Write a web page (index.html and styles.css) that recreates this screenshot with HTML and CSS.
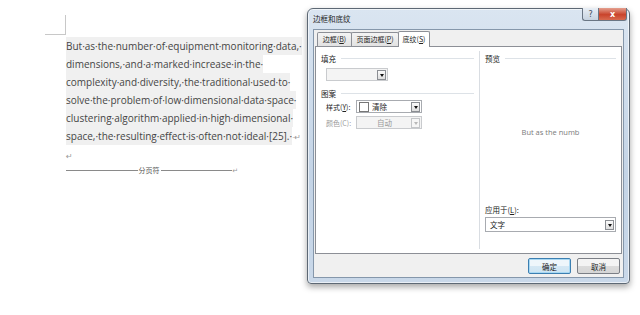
FILE: index.html
```html
<!DOCTYPE html>
<html lang="zh">
<head>
<meta charset="utf-8">
<title>边框和底纹</title>
<link rel="stylesheet" href="styles.css">
</head>
<body>
<div class="page">
  <div class="corner"></div>
  <p class="para"><span class="hl">But·as·the·number·of·equipment·monitoring·data,·</span><br><span class="hl">dimensions,·and·a·marked·increase·in·the·</span><br><span class="hl">complexity·and·diversity,·the·traditional·used·to·</span><br><span class="hl">solve·the·problem·of·low·dimensional·data·space·</span><br><span class="hl">clustering·algorithm·applied·in·high·dimensional·</span><br><span class="hl">space,·the·resulting·effect·is·often·not·ideal·[25].·</span><span class="mark">·↵</span></p>
  <p class="empty"><span class="mark">↵</span></p>
  <div class="pagebreak"><span class="pb-line"></span><span class="pb-text">分页符</span><span class="pb-line"></span><span class="mark small">↵</span></div>
</div>

<div class="dialog">
  <div class="titlebar">
    <span class="title">边框和底纹</span>
    <div class="caption-btns">
      <span class="cbtn help">?</span>
      <span class="cbtn close">x</span>
    </div>
  </div>
  <div class="client">
    <div class="tabs">
      <span class="tab">边框(<u>B</u>)</span>
      <span class="tab">页面边框(<u>P</u>)</span>
      <span class="tab active">底纹(<u>S</u>)</span>
    </div>
    <div class="panel">
      <div class="col-left">
        <div class="group-head">填充</div>
        <div class="select fill disabled"><span class="sel-text"></span><span class="arrow"></span></div>
        <div class="group-head pattern">图案</div>
        <div class="row">
          <span class="lbl">样式(<u>Y</u>):</span>
          <div class="select style"><span class="swatch"></span><span class="sel-text">清除</span><span class="arrow"></span></div>
        </div>
        <div class="row">
          <span class="lbl grey">颜色(C):</span>
          <div class="select style disabled"><span class="sel-text center">自动</span><span class="arrow faded"></span></div>
        </div>
      </div>
      <div class="col-right">
        <div class="group-head">预览</div>
        <div class="preview"><span>But as the numb</span></div>
        <div class="apply-lbl">应用于(<u>L</u>):</div>
        <div class="select apply"><span class="sel-text">文字</span><span class="arrow"></span></div>
      </div>
    </div>
    <div class="buttons">
      <span class="btn default">确定</span>
      <span class="btn">取消</span>
    </div>
  </div>
</div>
</body>
</html>
```

FILE: styles.css
```css
* { box-sizing: border-box; }
html, body { margin: 0; padding: 0; background: #ffffff; }
body {
  width: 640px;
  height: 315px;
  overflow: hidden;
  position: relative;
  font-family: "Open Sans", "DejaVu Sans", sans-serif;
}
.page { padding: 15px 0 0 66px; }
.corner {
  width: 21px;
  height: 20px;
  margin-left: -21px;
  border-right: 1px solid #c8c8c8;
  border-bottom: 1px solid #c8c8c8;
}
.para {
  margin: 2px 0 0 0;
  font-size: 10px;
  line-height: 18px;
  color: #454545;
  white-space: nowrap;
}
.hl { background: #f0f0f0; padding: 2px 0; }
.mark { color: #999; font-size: 8px; }
.mark.small { font-size: 7px; }
.empty { margin: 0; line-height: 14px; height: 16px; }
.pagebreak {
  display: flex;
  align-items: center;
  width: 172px;
  margin-top: 2px;
  height: 12px;
}
.pb-line { flex: 1; height: 1px; background: #8a8a8a; }
.pb-text {
  font-family: "Noto Sans CJK SC", sans-serif;
  font-size: 7px;
  color: #555;
  padding: 0 1px;
}

/* dialog window */
.dialog {
  position: absolute;
  left: 307px;
  top: 8px;
  width: 323px;
  height: 276px;
  border: 1px solid #5d6874;
  border-radius: 6px 6px 4px 4px;
  background: linear-gradient(#dae5f1, #c4d4e6 60%, #c9d8e9);
  box-shadow: 0 3px 6px rgba(0,0,0,0.35), inset 0 0 0 1px rgba(255,255,255,0.6);
  padding: 0 5px 5px 5px;
  display: flex;
  flex-direction: column;
  font-family: "Noto Sans CJK SC", sans-serif;
  font-size: 7.5px;
  color: #222;
}
.titlebar {
  height: 20px;
  display: flex;
  align-items: flex-start;
  justify-content: space-between;
}
.title { padding: 5px 0 0 0; font-size: 7.5px; color: #1e1e1e; line-height: 10px; }
.caption-btns { display: flex; margin-top: -1px; margin-right: -3px; }
.cbtn {
  height: 13px;
  display: flex;
  align-items: center;
  justify-content: center;
  font-family: "DejaVu Sans", sans-serif;
  font-size: 8px;
  border: 1px solid #6a7684;
  border-top: none;
}
.help {
  width: 16px;
  border-radius: 0 0 0 3px;
  background: linear-gradient(#e8eef5, #c7d3e0);
  color: #3e4b5a;
  border-right: none;
}
.close {
  width: 29px;
  border-radius: 0 0 3px 0;
  background: linear-gradient(#e4a08f, #c9442c 55%, #d86a4f);
  color: #fff;
  font-weight: bold;
}
.client {
  flex: 1;
  border: 1px solid #8597ab;
  background: #f0f0f0;
  padding: 2px 1px 0 1px;
  display: flex;
  flex-direction: column;
}
.tabs { display: flex; margin-left: 2px; height: 14px; align-items: flex-end; position: relative; z-index: 1; }
.tab {
  height: 14px;
  padding: 0 2px;
  line-height: 13px;
  border: 1px solid #8c8f96;
  border-bottom: none;
  background: linear-gradient(#f4f4f4, #e2e2e2);
  color: #222;
  margin-right: -1px;
  font-size: 7px;
  white-space: nowrap;
  text-align: center;
  border-radius: 2px 2px 0 0;
}
.tab:nth-child(1) { min-width: 35px; }
.tab:nth-child(2) { min-width: 48px; }
.tab.active {
  min-width: 32px;
  height: 16px;
  margin-top: -2px;
  margin-bottom: -1px;
  background: #ffffff;
  line-height: 15px;
}
u { text-decoration: underline; text-underline-offset: 1px; }
.panel {
  height: 208px;
  border: 1px solid #8c8f96;
  background: #ffffff;
  display: flex;
  padding: 4px 0;
}
.col-left {
  width: 164px;
  padding: 2px 5px 0 5px;
  border-right: 1px solid #d9dde2;
}
.col-right {
  flex: 1;
  padding: 2px 5px 17px 5px;
  display: flex;
  flex-direction: column;
}
.group-head {
  display: flex;
  align-items: center;
  height: 11px;
  font-size: 7.5px;
  color: #222;
}
.group-head::after {
  content: "";
  flex: 1;
  height: 1px;
  background: #dde2e7;
  margin-left: 5px;
}
.select {
  display: flex;
  align-items: center;
  border: 1px solid #a8abb0;
  background: #fff;
  height: 13px;
  padding: 1px;
}
.select.disabled { background: #f4f4f4; border-color: #c9cbce; }
.sel-text { flex: 1; font-size: 7.5px; padding-left: 3px; line-height: 9px; }
.sel-text.center { text-align: center; color: #9a9a9a; padding-left: 0; }
.arrow {
  width: 9px;
  height: 10px;
  border: 1px solid #8b8e93;
  background: linear-gradient(#fbfbfb, #dedede);
  position: relative;
}
.arrow::after {
  content: "";
  position: absolute;
  left: 2px;
  top: 3px;
  border-left: 2px solid transparent;
  border-right: 2px solid transparent;
  border-top: 3px solid #111;
}
.arrow.faded { border-color: #c4c6c9; background: #f6f6f6; }
.arrow.faded::after { border-top-color: #b8b8b8; }
.fill { width: 62px; margin: 4px 0 0 5px; }
.pattern { margin-top: 7px; }
.row { display: flex; align-items: center; margin: 1px 0 3px 5px; }
.row:first-of-type { margin-top: 2px; }
.lbl { width: 30px; font-size: 7px; color: #222; }
.lbl.grey { color: #9a9a9a; }
.style { width: 66px; }
.swatch { width: 10px; height: 10px; border: 1px solid #777; margin-left: 1px; }
.preview {
  flex: 1;
  display: flex;
  align-items: center;
  justify-content: center;
  font-family: "Open Sans", sans-serif;
  font-size: 7.5px;
  color: #7a7a7a;
  padding-bottom: 4px;
}
.apply-lbl { font-size: 7.5px; margin-bottom: 2px; }
.apply { height: 15px; }
.buttons {
  display: flex;
  justify-content: flex-end;
  gap: 6px;
  padding: 4px 2px 0 0;
}
.btn {
  width: 43px;
  height: 16px;
  border: 1px solid #7b7f86;
  border-radius: 2px;
  background: linear-gradient(#f4f4f4 50%, #dcdcdc 50%, #d6d6d6);
  display: flex;
  align-items: center;
  justify-content: center;
  font-size: 7.5px;
  color: #222;
}
.btn.default {
  border-color: #3c7fb1;
  box-shadow: inset 0 0 0 1px #a8d8f3;
  background: linear-gradient(#eef6fb 50%, #d5e8f4 50%, #cde4f2);
}
```
